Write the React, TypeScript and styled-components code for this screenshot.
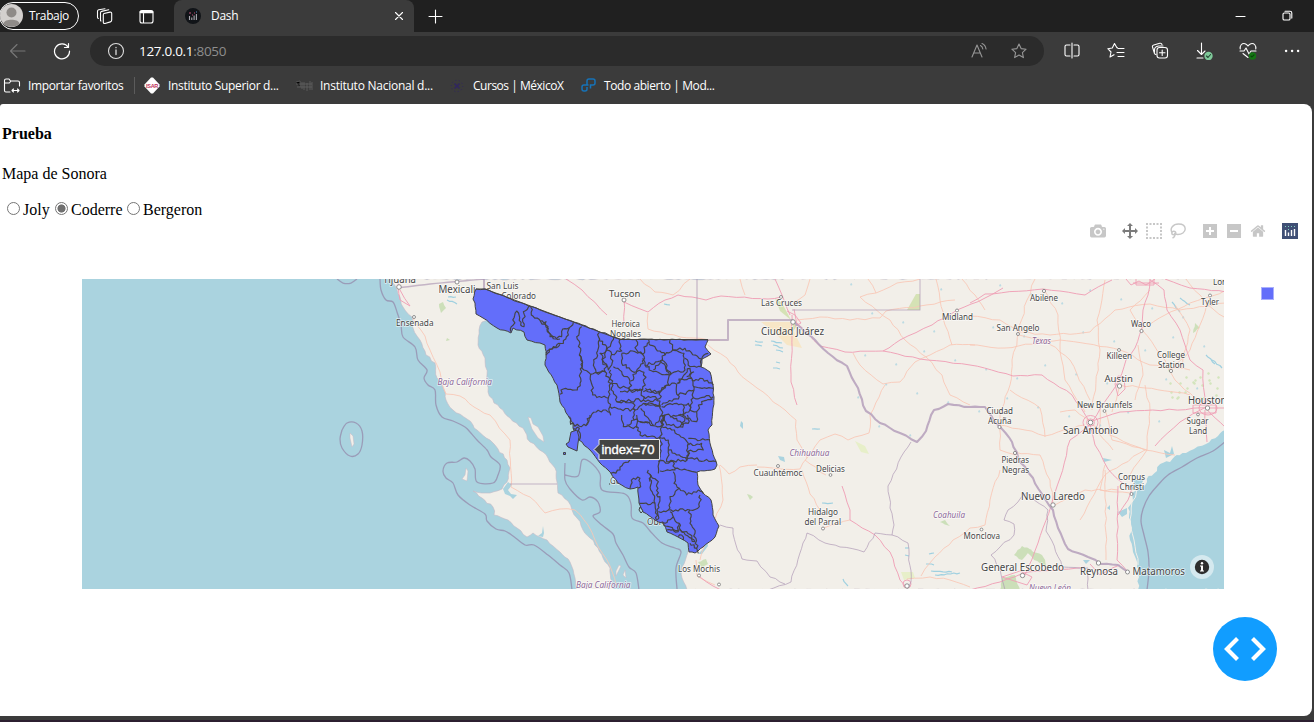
import React, { useState } from 'react';
import styled, { createGlobalStyle } from 'styled-components';

const GlobalStyle = createGlobalStyle`
  * { box-sizing: border-box; }
  html, body { margin: 0; padding: 0; background: #3b3b3b; }
  body { overflow: hidden; }
`;

/* ---------- browser chrome ---------- */

const Window = styled.div`
  width: 1314px;
  height: 722px;
  display: flex;
  flex-direction: column;
  background: #3b3b3b;
  border-bottom: 2px solid #2c1f30;
  color: #fff;
  font-family: 'Open Sans', 'Noto Sans', sans-serif;
  font-size: 12px;
  overflow: hidden;
`;

const TabStrip = styled.div`
  height: 32px;
  flex: none;
  display: flex;
  align-items: stretch;
  background: #202020;
`;

const Profile = styled.div`
  width: 80px;
  height: 28px;
  margin: 2px 0 0 -1px;
  border: 1px solid #fff;
  border-radius: 14px;
  display: flex;
  align-items: center;
  gap: 6px;
  padding: 0 0 1px 0;
  letter-spacing: -0.35px;
`;

const StripIcon = styled.div<{ $gap: number }>`
  display: flex;
  align-items: center;
  margin-left: ${(p) => p.$gap}px;
`;

const Tab = styled.div`
  width: 240px;
  margin-left: 20px;
  border-radius: 8px 8px 0 0;
  background: #3b3b3b;
  display: flex;
  align-items: center;
  padding: 0 10px 1px 11px;
  letter-spacing: -0.3px;
`;

const TabTitle = styled.span`
  flex: 1;
  margin-left: 10px;
`;

const WindowButtons = styled.div`
  margin-left: auto;
  display: flex;
  align-items: center;
  gap: 34px;
  padding-right: 21px;
`;

const Toolbar = styled.div`
  height: 38px;
  flex: none;
  display: flex;
  align-items: center;
  padding: 0 13px 0 9px;
`;

const NavIcons = styled.div`
  width: 81px;
  display: flex;
  align-items: center;
  gap: 26px;
`;

const AddressBar = styled.div`
  width: 954px;
  height: 30px;
  border-radius: 15px;
  background: #2b2b2b;
  display: flex;
  align-items: center;
  padding: 0 16px 0 17px;
`;

const Address = styled.div`
  flex: 1;
  margin-left: 14px;
  font-size: 13.5px;
  letter-spacing: -0.3px;
  span { color: #8e8e8e; }
`;

const AddressIcons = styled.div`
  display: flex;
  gap: 22px;
`;

const ToolIcons = styled.div`
  flex: 1;
  display: flex;
  justify-content: space-between;
  margin-left: 19px;
`;

const Bookmarks = styled.div`
  height: 34px;
  flex: none;
  display: flex;
  align-items: center;
  padding: 0 0 3px 3px;
`;

const Bookmark = styled.div<{ $width: number; $gap: number; $tracking: number }>`
  width: ${(p) => p.$width}px;
  display: flex;
  align-items: center;
  gap: ${(p) => p.$gap}px;
  white-space: nowrap;
  font-size: 12px;
  letter-spacing: ${(p) => p.$tracking}px;
  svg { flex: none; }
`;

const Divider = styled.div`
  width: 1px;
  height: 17px;
  margin-right: 8px;
  background: #5c5c5c;
`;

/* ---------- page ---------- */

const Page = styled.main`
  position: relative;
  width: 1312px;
  height: 612px;
  flex: none;
  padding: 20px 2px 0;
  background: #fff;
  border-radius: 3px 8px 8px 0;
  color: #000;
  font-family: 'Liberation Serif', serif;
  font-size: 16px;
  line-height: 18px;
`;

const Title = styled.h4`
  margin: 1px 0 22px;
  font-size: 16px;
`;

const Subtitle = styled.p`
  margin: 0 0 18px;
`;

const RadioRow = styled.div`
  height: 18px;
  display: flex;
  align-items: flex-start;
`;

const RadioLabel = styled.label<{ $width: number }>`
  width: ${(p) => p.$width}px;
  display: flex;
  white-space: nowrap;
  input {
    width: 13px;
    height: 13px;
    margin: 1px 3px 0 5px;
    flex: none;
    appearance: none;
    border: 1px solid #767676;
    border-radius: 50%;
    background: #fff;
  }
  input:checked {
    background: radial-gradient(circle, #707070 0 3.7px, #fff 4.4px);
  }
`;

const Graph = styled.section`
  display: flex;
  flex-direction: column;
`;

const Modebar = styled.div`
  height: 24px;
  display: flex;
  justify-content: flex-end;
  align-items: center;
  padding-right: 12px;
`;

const ModeGroup = styled.div`
  display: flex;
  gap: 8px;
  margin-left: 16px;
  svg { display: block; }
`;

const Plot = styled.div`
  display: flex;
  margin: 36px 0 0 80px;
`;

const MapFrame = styled.div`
  position: relative;
  width: 1142px;
  height: 310px;
  overflow: hidden;
  svg { display: block; }
`;

const Hover = styled.div`
  position: absolute;
  left: 511px;
  top: 159px;
`;

const Attribution = styled.div`
  position: absolute;
  right: 10px;
  bottom: 10px;
  width: 24px;
  height: 24px;
  border-radius: 50%;
  background: rgba(255, 255, 255, 0.5);
  display: flex;
  align-items: center;
  justify-content: center;
`;

const LegendSwatch = styled.div`
  width: 13px;
  height: 13px;
  margin: 8px 0 0 37px;
  background: #636efa;
  border: 1px solid #aab0fc;
`;

const DevButton = styled.button`
  position: absolute;
  right: 35px;
  bottom: 35px;
  width: 64px;
  height: 64px;
  padding: 0;
  border: 0;
  border-radius: 50%;
  background: #119dff;
`;

/* ---------- map geometry ---------- */

type Point = [number, number];

const parse = (s: string): Point[] =>
  s.trim().split(/\s+/).map((p) => p.split(',').map(Number) as Point);

/* Adds small deterministic irregularities between the vertices of a line. */
const rough = (s: string, amount = 4, step = 12, closed = false): string => {
  const pts = parse(s);
  if (closed) pts.push(pts[0]);
  let d = `M${pts[0][0]} ${pts[0][1]}`;
  for (let i = 1; i < pts.length; i++) {
    const [ax, ay] = pts[i - 1];
    const [bx, by] = pts[i];
    const len = Math.hypot(bx - ax, by - ay) || 1;
    const n = Math.max(1, Math.round(len / step));
    for (let k = 1; k < n; k++) {
      const t = k / n;
      const x = ax + (bx - ax) * t;
      const y = ay + (by - ay) * t;
      const r = Math.sin(x * 12.9898 + y * 78.233) * 43758.5453;
      const off = (r - Math.floor(r) - 0.5) * 2 * amount;
      d += `L${(x - ((by - ay) / len) * off).toFixed(1)} ${(y + ((bx - ax) / len) * off).toFixed(1)}`;
    }
    d += `L${bx} ${by}`;
  }
  return closed ? d + 'Z' : d;
};

/* Smooth curve through the vertices. */
const smooth = (s: string): string => {
  const p = parse(s);
  let d = `M${p[0][0]} ${p[0][1]}`;
  for (let i = 0; i < p.length - 1; i++) {
    const a = p[Math.max(0, i - 1)];
    const b = p[i];
    const c = p[i + 1];
    const e = p[Math.min(p.length - 1, i + 2)];
    d += `C${b[0] + (c[0] - a[0]) / 6} ${b[1] + (c[1] - a[1]) / 6} ${c[0] - (e[0] - b[0]) / 6} ${c[1] - (e[1] - b[1]) / 6} ${c[0]} ${c[1]}`;
  }
  return d;
};

const BAJA =
  '391,279 397,290 400,297 403,307 412,317 413,328 420,340 426,355 435,363 437,378 444,390 446,400 453,410 467,419 473,425 477,430 490,440 498,449 507,460 510,468 507,482 502,489 490,493 473,491 482,498 493,507 494,515 508,520 517,528 527,537 533,533 547,540 560,552 570,562 575,578 577,590 613,590 612,582 610,568 603,558 598,548 590,538 583,530 577,518 572,510 568,501 558,493 557,482 555,468 548,458 543,452 530,442 523,428 510,418 500,408 494,403 488,392 487,375 485,358 478,345 479,330 482,322 488,318 520,325 550,338 565,380 585,425 612,460 632,480 650,505 690,540 688,552 682,567 682,578 687,590 1226,590 1226,278';

const GULF_OF_MEXICO =
  '1226,430 1218,436 1206,444 1194,449 1186,453 1176,455 1170,462 1160,464 1157,471 1148,476 1147,482 1139,488 1132,493 1133,501 1128,508 1129,518 1132,528 1130,540 1133,552 1137,567 1139,577 1138,590 1226,590';

const SONORA =
  '476,289 485,289 540,310 620,339 708,340 705,347 711,354 702,359 701,367 710,372 713,385 714,397 713,408 712,425 708,430 711,447 717,465 715,469 697,472 698,485 703,493 711,500 713,515 719,526 715,537 703,547 695,553 689,552 688,543 678,537 667,532 663,523 655,520 643,512 639,503 638,487 630,489 618,483 608,470 600,463 590,450 579,440 573,428 572,422 560,402 557,385 545,365 546,355 545,345 540,343 527,340 524,332 513,328 511,333 497,328 483,318 476,314 475,303 473,299';

interface Tile { x: number; y: number; lines: string[] }

const MUNICIPALITIES: Tile[] = [
  {
    x: 320, y: 275,
    lines: ['572,170 590,108 602,150 612,155 610,110 628,92', '632,96 634,120 662,140 685,160 690,185 720,192', '678,235 695,222 720,208'],
  },
  {
    x: 540, y: 275,
    lines: [
      '0,138 18,140 22,170 48,192 65,185 68,162 88,158 100,142',
      '18,240 40,215 70,205 85,180 88,158',
      '125,155 110,185 122,220 118,240 128,262 122,310 112,345 70,342 60,358',
      '120,240 132,285 152,298 158,360 205,370 212,325 195,290 152,298',
      '178,172 175,220 162,262 175,298 195,290 200,268 180,235 200,225 215,200 222,185',
      '178,190 215,238 245,228 240,193',
      '200,225 188,260 205,285 215,270 215,238',
      '245,235 285,230 308,238 310,265 282,292 245,265 245,235',
      '288,195 290,225 308,238 322,205 326,195',
      '326,205 360,228 375,240 360,258 315,270 308,250',
      '390,195 398,225 432,235 435,285 390,300 378,265 365,255',
      '375,240 398,225', '398,225 435,220 485,252', '435,250 450,275 483,275',
      '220,275 245,290 270,318 270,345 215,325 212,285',
      '272,318 290,290 312,292 316,330 308,345 270,345',
      '315,270 340,290 388,300 386,330 350,352 316,340',
      '340,285 362,258 388,300',
      '215,325 220,350 230,380 310,375 305,345 240,350',
      '205,370 210,395 235,402 285,405 280,385 230,380',
      '210,395 212,420 190,405 155,418 138,450',
      '285,405 282,435 260,450', '285,405 310,385 360,390 365,420 345,450',
      '310,350 360,352 360,370 310,365', '310,375 360,378 360,395 312,385',
      '360,352 382,330 410,328 415,372 365,390', '365,395 410,385 430,390 428,420 365,422',
      '412,325 425,312 455,310 462,345 415,360', '455,310 450,280 432,300 412,325',
      '455,315 480,310 520,330', '460,335 520,340', '462,345 460,368 520,365',
      '460,368 450,405 470,410 485,380 518,372', '430,390 445,385 450,405 428,420',
      '428,420 440,432 470,440 470,410', '365,422 370,450', '390,425 410,430 428,450', '282,435 330,440',
      '462,290 440,305', '483,275 485,252 505,235',
      '302,400 320,425 340,450',
    ],
  },
  {
    x: 540, y: 415,
    lines: [
      '88,5 92,28 138,32 150,0', '100,40 118,40 118,75',
      '245,0 250,35 295,38 300,60 365,70', '290,0 290,38', '300,20 360,35 375,0',
      '370,0 365,35 362,80 360,135', '365,35 395,45 418,60 445,85 442,135',
      '375,0 380,30 420,35 435,10 415,0', '420,35 445,25 442,0',
      '445,70 510,75', '445,90 485,85 490,105 445,108', '445,108 442,130 528,140',
      '365,70 385,75 385,105 380,140 442,135', '385,105 410,120 440,135',
      '212,175 240,165 250,145 295,120 352,95', '352,95 358,140 355,175',
      '355,140 400,140 405,165 360,168', '405,160 440,165 470,172',
      '270,222 280,190 300,190 302,215 295,220', '330,178 332,210 345,265 350,315', '330,178 355,200 350,240 360,245 352,290 352,315',
      '298,265 345,265', '325,165 330,200', '400,170 402,205 418,220 390,245 385,285 355,290',
      '418,220 440,240 475,225 490,235', '385,285 450,285 478,275 480,240',
      '450,285 450,325 465,355 470,400', '390,290 400,305 375,325 365,320', '400,305 418,325 415,350 370,330',
      '380,345 440,350 465,380', '418,325 425,350 465,380', '450,385 470,400 475,415', '415,365 425,360 430,375',
    ],
  },
];

const MARITIME = [
  '380,279 381,290 386,300 393,302 397,312 401,325 403,337 415,347 418,360 427,370 424,378 428,385 435,390 436,405 442,417 453,421 465,427 470,432 477,440 487,450 491,457 500,465 498,475 493,483 477,482 475,469 470,461 464,458 457,462 447,463 443,471 446,478 453,483 458,495 470,505 485,514 487,521 496,529 505,531 513,536 525,545 534,545 548,555 560,565 569,573 572,590',
  '337,279 343,283 351,283 357,279',
  '342,430 347,423 356,423 362,431 362,445 358,454 350,456 342,448 340,439 342,430',
  '565,463 565,480 570,489 582,500 590,497 598,502 600,512 593,516 602,525 613,534 616,543 623,555 629,567 636,573 639,590',
  '565,475 578,476 582,460 590,462 600,474 602,490 625,494 631,504 632,518 643,523 650,531 662,543 675,548 681,552 676,568 677,589',
  '1226,441 1213,451 1197,458 1182,467 1168,475 1158,485 1149,496 1143,509 1141,521 1144,535 1148,552 1149,570 1147,590',
];

const STATE_BORDERS: { s: string; w: number }[] = [
  { s: '397,288 430,284 484,279', w: 1.4 }, { s: '484,279 484,290 620,340 728,340 728,320 792,320', w: 2 },
  { s: '697,279 697,340', w: 1.2 }, { s: '792,310 920,310 920,279', w: 1.01 }, { s: '510,484 557,484', w: 1.01 },
  { s: '911,442 901,457 888,486 890,508 894,525 892,535 875,533 864,552 840,547 825,543 807,533 803,543 791,582 768,590', w: 1 },
  { s: '892,535 908,543 911,582 907,590', w: 1 },
  { s: '720,525 733,528 736,545 742,559 757,561 770,577 785,584', w: 1 },
  { s: '1027,493 1008,510 1004,520 1014,524 1014,535 991,555 1000,569 1005,590', w: 1 },
  { s: '1027,493 1048,510 1046,531 1052,541 1062,567 1088,568 1088,590', w: 1 },
];

const RIO_GRANDE =
  '792,320 806,333 815,340 828,353 847,366 858,388 866,411 880,423 900,433 917,442 926,431 934,410 948,404 970,407 985,407 998,425 1012,442 1020,462 1033,478 1042,494 1053,510 1058,528 1068,549 1088,557 1101,564 1118,565 1128,572';

const MOTORWAYS = [
  '566,279 582,290 607,315', '624,299 624,325', '624,302 648,312 665,300 678,295 706,300 721,296 768,299 781,297', '775,279 782,295 790,315',
  '792,315 792,335 791,382 797,405', '797,323 820,346 845,352 883,351 900,340 932,325 957,310 985,298 1003,288',
  '883,351 920,359 970,365 1013,376 1042,375 1072,395 1090,422', '970,303 985,294 1043,289 1085,295 1112,280',
  '1092,422 1106,400 1119,380 1126,360 1135,348 1142,328 1143,310 1148,295 1150,279', '1090,422 1120,412 1210,408 1226,408',
  '1090,425 1070,440 1060,478 1051,506 1038,543 1025,575', '1090,425 1095,445 1108,469 1130,490',
  '842,486 850,510 850,520 875,535 890,552 900,580 907,588', '1118,486 1117,560 1128,572', '1150,280 1164,290 1167,310 1180,330 1190,360 1203,370 1205,405',
  '400,290 410,306 400,300 398,280', '700,577 713,586 721,590', '1120,565 1100,575 1090,564', '970,590 1000,582 1028,572 1085,567',
  '1132,487 1128,500 1118,515', '1155,446 1180,422 1206,407', '1205,410 1207,442', '1205,407 1226,428', '1165,279 1190,288 1226,292',
];

const ROADS = [
  '413,318 425,336 430,350 440,372 446,394 460,396 474,407 490,415 505,434 510,440 511,487 530,497 545,513 560,509 575,510 588,525 595,540 607,560 616,585',
  '640,279 655,292 673,295 690,279', '648,313 648,329 680,337 720,340', '708,345 727,358 738,372 757,388 785,410 796,420 797,440 807,458 820,440 835,434 848,440 869,433 870,415 885,385',
  '797,320 820,317 850,320 880,318 886,311 920,306 955,300', '868,279 876,293 860,297 890,320 905,340 926,357 942,375 950,395 970,405', '876,293 897,283 920,279',
  '807,458 800,469 780,469 757,467', '720,465 729,474 740,467 757,465', '805,460 826,475', '802,470 810,494 820,510', '824,528 850,520',
  '853,353 860,365 883,384 900,382 915,362 930,355 950,345 975,345', '936,279 940,300 945,325 952,345', '962,279 975,295 985,310',
  '921,576 935,557 953,540 970,528 985,525 990,500 1000,470', '907,579 930,577 950,580 970,587', '970,316 1000,320 1020,332 1050,335 1090,332 1115,310 1150,304 1180,310 1226,303',
  '970,345 1005,348 1060,340 1120,350 1150,365 1190,370', '1020,330 1012,360 1010,385 1000,415', '1044,290 1058,315 1060,345 1065,380 1085,412',
  '1035,279 1027,300 1018,333', '1105,280 1097,320 1100,350 1092,410', '1019,335 1045,340 1070,360 1090,400', '1000,425 1025,430 1045,436 1085,425',
  '1015,452 1040,455 1050,480 1053,505', '1092,425 1110,435 1145,450 1175,455', '1105,410 1112,440 1147,450', '1105,465 1100,490 1130,493', '1105,470 1106,560',
  '1120,385 1145,388 1190,395', '1145,385 1150,410 1147,450 1125,480', '1142,330 1165,360 1175,380 1200,402', '1142,328 1165,315 1190,303 1212,296 1226,290',
  '1090,422 1075,410 1060,412', '1170,372 1190,350 1200,325 1210,298', '1150,290 1130,310 1142,328', '1080,520 1105,475 1145,450', '1055,505 1085,490 1118,490',
  '1000,415 1000,450 1016,455', '1010,390 1040,408 1045,437', '1181,368 1190,330 1175,305', '1186,279 1200,295 1213,309 1226,318', '1100,400 1100,435 1113,450',
  '740,279 745,295', '810,279 805,295 793,303', '719,465 723,500 705,540 700,560', '696,560 697,576 715,585', '1138,345 1143,375 1135,400', '1119,388 1112,412',
];

const LAKES = [
  '755,341 763,342', '755,345 762,346', '771,341 782,343', '773,345 783,348', '776,350 783,352', '776,362 780,363', '773,368 780,369', '812,429 820,429', '822,503 833,503',
  '905,548 909,548', '905,555 909,556', '926,564 934,565', '931,571 952,572', '935,575 960,573', '448,297 456,297', '447,300 457,304', '664,304 670,305',
  '929,554 934,553', '843,579 848,586', '1190,305 1180,298', '1172,302 1180,312', '1212,360 1222,368', '1206,355 1215,364',
];

const PARKS = [
  '439,304 443,302 446,308 441,313', '1032,550 1022,546 1014,555 1022,560', '1025,548 1034,560 1048,568 1042,555', '1002,578 1015,575 1020,590 1000,590',
  '940,522 950,526 945,520', '747,494 753,497 750,500', '698,562 706,559 708,564 702,568', '1195,323 1200,328 1193,333', '447,338 450,340 446,341',
];

interface Label { t: string; x: number; w: number; y: number; size?: number; region?: boolean }

const LABELS: Label[] = [
  { t: 'Tijuana', x: 383, w: 33, y: 283, size: 10 }, { t: 'Mexicali', x: 438.5, w: 37, y: 293, size: 10 },
  { t: 'San Luis', x: 486.5, w: 32, y: 289 }, { t: 'Colorado', x: 501.5, w: 34.5, y: 299 },
  { t: 'Ensenada', x: 396, w: 37.5, y: 326 }, { t: 'Baja California', x: 437.5, w: 54.5, y: 385, region: true },
  { t: 'Tucson', x: 609, w: 31.5, y: 296.5, size: 9.5 }, { t: 'Heroica', x: 611.5, w: 28.5, y: 327 }, { t: 'Nogales', x: 610, w: 31, y: 337 },
  { t: 'Los Mochis', x: 678, w: 42, y: 572 }, { t: 'Baja California', x: 576, w: 54.5, y: 588, region: true },
  { t: 'Las Cruces', x: 761, w: 41, y: 306 }, { t: 'Ciudad Juárez', x: 761, w: 63, y: 335, size: 10 },
  { t: 'Midland', x: 942, w: 31, y: 320 }, { t: 'Chihuahua', x: 789.5, w: 40, y: 455.5, region: true },
  { t: 'Cuauhtémoc', x: 753.5, w: 49, y: 475.5 }, { t: 'Delicias', x: 816, w: 29, y: 471.5 },
  { t: 'Hidalgo', x: 808, w: 30, y: 515 }, { t: 'del Parral', x: 804.5, w: 36.5, y: 524.5 },
  { t: 'Coahuila', x: 933, w: 32, y: 518, region: true }, { t: 'Abilene', x: 1030, w: 28, y: 300.5 },
  { t: 'San Angelo', x: 996.5, w: 43, y: 331 }, { t: 'Texas', x: 1032, w: 19, y: 343.5, region: true },
  { t: 'Waco', x: 1131, w: 20, y: 327 }, { t: 'Killeen', x: 1106.5, w: 25.5, y: 358.5 },
  { t: 'College', x: 1157, w: 28, y: 358 }, { t: 'Station', x: 1158, w: 26.5, y: 367.5 },
  { t: 'Tyler', x: 1201, w: 18, y: 305 }, { t: 'Longview', x: 1213, w: 36, y: 285 },
  { t: 'Austin', x: 1104.5, w: 28.5, y: 382, size: 9.8 }, { t: 'New Braunfels', x: 1077, w: 55.5, y: 407.5 },
  { t: 'Houston', x: 1188, w: 38.5, y: 404, size: 10 }, { t: 'Sugar', x: 1186.5, w: 22, y: 424 }, { t: 'Land', x: 1189, w: 18, y: 433.5 },
  { t: 'San Antonio', x: 1063, w: 55.5, y: 434, size: 10 }, { t: 'Ciudad', x: 986.5, w: 26.5, y: 414 }, { t: 'Acuña', x: 988, w: 23.5, y: 423.5 },
  { t: 'Piedras', x: 1001.5, w: 27.5, y: 463 }, { t: 'Negras', x: 1002, w: 27, y: 472.5 }, { t: 'Corpus', x: 1118, w: 27, y: 480 },
  { t: 'Christi', x: 1119.5, w: 24.5, y: 489.5 }, { t: 'Nuevo Laredo', x: 1021, w: 64, y: 500, size: 10 },
  { t: 'Monclova', x: 963.5, w: 36.5, y: 538.5 }, { t: 'General Escobedo', x: 981, w: 83, y: 570.5, size: 10 },
  { t: 'Reynosa', x: 1080, w: 38, y: 575, size: 10 }, { t: 'Matamoros', x: 1132.5, w: 52.5, y: 575, size: 10 },
  { t: 'Nuevo León', x: 1029, w: 42, y: 590.5, region: true },
];

const TOWNS: [number, number, number][] = [
  [399, 287, 2.3], [457, 282, 2], [414, 317, 1.5], [624, 300, 2], [781, 297, 1.5], [793, 322, 2.3], [957, 310.5, 1.5], [778, 466, 1.5], [830.5, 475, 1.4],
  [823, 528.5, 1.5], [907, 586, 2.2], [1044, 291, 1.6], [1018, 334, 1.5], [1141.5, 331, 1.6], [1119, 350, 1.5], [1171, 371, 1.6], [1119.5, 386, 2.2], [1104.5, 411, 1.4],
  [1090.5, 422.5, 2.3], [1207.5, 408, 2.2], [1198, 414.5, 1.4], [999.5, 427, 1.6], [1015, 453, 1.6], [1131.5, 494, 1.5], [1053, 505, 2.2], [981.5, 529.5, 1.4],
  [1022.5, 575.5, 2.2], [1098.5, 563, 2.2], [1127.5, 572, 2], [1210, 295.5, 1.5], [699, 575.5, 1.5], [719, 584.5, 1.5],
];

const MapLabel = ({ l }: { l: Label }) => (
  <text
    x={l.x}
    y={l.y}
    textLength={l.w}
    lengthAdjust="spacingAndGlyphs"
    fontFamily="'Noto Sans', sans-serif"
    fontSize={l.size ?? 8.4}
    fontStyle={l.region ? 'italic' : 'normal'}
    fill={l.region ? '#8d699a' : '#464646'}
    stroke="#fff"
    strokeOpacity={0.65}
    strokeWidth={1.6}
    paintOrder="stroke"
  >
    {l.t}
  </text>
);

const SonoraMap = () => (
  <svg width="1142" height="310" viewBox="82 279 1142 310" fill="none" strokeLinejoin="round">
    <rect x="82" y="279" width="1142" height="310" fill="#aad3df" />
    <path d={rough(BAJA, 1.1, 4, true)} fill="#f2efe9" stroke="#c5b8c6" strokeWidth="0.6" />
    <path d={rough(GULF_OF_MEXICO, 1.6, 4, true)} fill="#aad3df" />
    <path d={rough('1205,440 1185,451 1165,459 1152,472 1140,486 1132,502 1130,520 1134,540 1138,565', 1, 6)} stroke="#f2efe9" strokeWidth="1" />
    <g fill="#f2efe9" stroke="#c5b8c6" strokeWidth="0.5">
      <path d="M528 417l3 1 2 6 5 3 5 9 1 6-6-4-6-9z" /><path d="M350 433l3 3 1 8-2 3-2-9z" />
      <path d="M466 468l2 3-1 10-5-2 3-4z" /><path d="M616 571l3-6 2 1-5 10zM623 575l2-5 1 8z" />
    </g>
    <g fill="#aad3df">
      <path d="M508 482l-5 7 2 5 5 2 3 3 4-4-6-1-3-4 4-5z" /><path d="M543 526l-1 7-4 3 5 1 1-4z" />
      <path d="M707 541l-4 8-5 5 4 0 6-8z" /><path d="M741 421l2 2v6l-3-3zM778 456l6 1 1 5-5-2zM1112 460l-8 2-1-4zM1127 508l-9 4 4 5 5-3z" />
      <path d="M1145 477l-8 3-5-1 3 5-8 2 5 4 8-3zM1174 454l-2-8-2 7-6-3 2 8zM1110 505l-3 3 3 2zM1090 560l-4 4-3-4z" />
    </g>
    <g fill="#cfdfa9" opacity="0.8">
      <path d="M775 298l7 5 9 17-11-9z" /><path d="M907 310l9-16h4v16z" /><path d="M792 320l5 6-4 5z" />
      {PARKS.map((p) => <path key={p} d={rough(p, 0.8, 3, true)} fill="#c3dcae" />)}
    </g>
    <path d="M761 322h29l4 10 8 16-15-3-12-12z" fill="#f7e3bd" opacity="0.8" />
    <path d="M855 441l10 5 4 8-8-2zM901 572h12l2 6-11 2z" fill="#e7efc9" />
    <g stroke="#9fd0e0" strokeWidth="1.2">{LAKES.map((l) => <path key={l} d={rough(l, 0.7, 3)} />)}</g>
    <g fill="#bcdbe3">
      {Array.from({ length: 46 }, (_, i) => {
        const x = 850 + ((i * 83) % 370);
        const y = 284 + ((i * 47) % 155);
        return <path key={i} d={`M${x} ${y}l1.6-1 .8 2-1.6.8z`} />;
      })}
    </g>
    <g fill="#d3e5bd">
      {Array.from({ length: 24 }, (_, i) => {
        const x = 1168 + ((i * 31) % 54);
        const y = 370 + ((i * i * 7) % 30);
        return <path key={i} d={`M${x} ${y}l2-1 1 2-2 1z`} />;
      })}
    </g>
    <g stroke="#f9c6b5" strokeWidth="0.85">{ROADS.map((r) => <path key={r} d={rough(r, 1, 7)} />)}</g>
    <g stroke="#efa0b6" strokeWidth="0.95">{MOTORWAYS.map((r) => <path key={r} d={rough(r, 0.7, 8)} />)}</g>
    <g stroke="#ef9eb4" strokeWidth="0.9">
      <ellipse cx="1090.5" cy="422.5" rx="7.5" ry="7" /><ellipse cx="1090.5" cy="422.5" rx="4" ry="3.6" />
      <rect x="1193" y="405" width="23" height="8" /><ellipse cx="1208" cy="408" rx="9" ry="7" />
      <path d="M1126 279l5 6 8-4 7 4 9-6M1136 279v6h18v-6M1133 283h26M1115 384l3-8 6 1 1 12-7 7z" />
      <path d="M787 311l8 4 6 8-6 3M794 309l3 16M1002 577l18-6 12 6-5 8z" /><circle cx="907" cy="584" r="4" />
    </g>
    <g stroke="#aa93b2" strokeOpacity="0.65">{STATE_BORDERS.map((b) => <path key={b.s} d={rough(b.s, b.w > 1 ? 0 : 1, 6)} strokeWidth={b.w} />)}</g>
    <path d={rough(RIO_GRANDE, 1, 6)} stroke="#b8a3be" strokeWidth="2.1" strokeOpacity="0.9" />
    <g stroke="#948aab" strokeOpacity="0.75" strokeWidth="1.3">{MARITIME.map((m) => <path key={m} d={smooth(m)} />)}</g>
    <g fill="#fff" stroke="#777" strokeWidth="0.8">{TOWNS.map(([x, y, r]) => <circle key={`${x}-${y}`} cx={x} cy={y} r={r} />)}</g>
    {LABELS.map((l) => <MapLabel key={l.t + l.y} l={l} />)}
    <MapLabel l={{ t: 'Guaymas', x: 610, w: 34, y: 484 }} />
    <MapLabel l={{ t: 'Obregón', x: 647, w: 35, y: 525, size: 9.5 }} />
    <path d={rough(SONORA, 0.7, 4, true)} fill="#636efa" stroke="#444" strokeWidth="1" />
    <path d="M476 289H485L620 339.500H708" stroke="#444" strokeWidth="1" />
    {MUNICIPALITIES.map((tile) => (
      <g key={`${tile.x}-${tile.y}`} transform={`translate(${tile.x} ${tile.y}) scale(0.33333)`} stroke="#444" strokeWidth="3.5">
        {tile.lines.map((l) => <path key={l} d={rough(l, 5, 7)} />)}
      </g>
    ))}
    <path d="M571 432l6-2 2 7-1 6-1 8-9-4-2-3 3-2z" fill="#636efa" stroke="#444" />
    <rect x="563.500" y="452.500" width="2" height="2" fill="#636efa" stroke="#444" />
    <path d="M609 484h1M640 507l3 4-2 2-2-3z" stroke="#444" fill="#aad3df" />
  </svg>
);

/* ---------- icons ---------- */

const PLOT_ICONS = {
  camera: 'm500 450c-83 0-150-67-150-150 0-83 67-150 150-150 83 0 150 67 150 150 0 83-67 150-150 150z m400 150h-120c-16 0-34 13-39 29l-31 93c-6 15-23 28-40 28h-340c-16 0-34-13-39-28l-31-94c-6-15-23-28-40-28h-120c-55 0-100-45-100-100v-450c0-55 45-100 100-100h800c55 0 100 45 100 100v450c0 55-45 100-100 100z m-400-550c-138 0-250 112-250 250 0 138 112 250 250 250 138 0 250-112 250-250 0-138-112-250-250-250z m365 380c-19 0-35 16-35 35 0 19 16 35 35 35 19 0 35-16 35-35 0-19-16-35-35-35z',
  pan: 'm1000 350l-187 188 0-125-250 0 0 250 125 0-188 187-187-187 125 0 0-250-250 0 0 125-188-188 186-187 0 125 252 0 0-250-125 0 187-188 188 188-125 0 0 250 250 0 0-126 187 188z',
  plus: 'm1 787l0-875 875 0 0 875-875 0z m687-500l-187 0 0-187-125 0 0 187-188 0 0 125 188 0 0 187 125 0 0-187 187 0 0-125z',
  minus: 'm0 788l0-876 876 0 0 876-876 0z m688-500l-500 0 0 125 500 0 0-125z',
  home: 'm786 296v-267q0-15-11-26t-25-10h-214v214h-143v-214h-214q-15 0-25 10t-11 26v267q0 1 0 2t0 2l321 264 321-264q1-1 1-4z m124 39l-34-41q-5-5-12-6h-2q-7 0-12 3l-386 322-386-322q-7-4-13-4-7 2-12 7l-35 41q-4 5-3 13t6 12l401 334q18 15 42 15t43-15l136-114v109q0 8 5 13t13 5h107q8 0 13-5t5-13v-227l122-102q5-5 6-12t-4-13z',
};

const ModeIcon = ({ d, width = 1000, active = false }: { d: string; width?: number; active?: boolean }) => (
  <svg width="16" height="16" viewBox={`0 0 ${width} 1000`}>
    <path d={d} transform="matrix(1 0 0 -1 0 850)" fill={active ? '#7b7b7b' : '#c7c7c7'} />
  </svg>
);

const Icon = ({ size = 16, color = '#fff', children }: { size?: number; color?: string; children: React.ReactNode }) => (
  <svg width={size} height={size} viewBox={`0 0 ${size} ${size}`} fill="none" stroke={color} strokeWidth="1.1" strokeLinecap="round" strokeLinejoin="round">
    {children}
  </svg>
);

const STAR = 'M8 1l2.100 4.600 5 .6-3.700 3.400 1 5L8 12.100l-4.400 2.500 1-5L.9 6.200l5-.6z';

const Chrome = () => (
  <>
    <TabStrip>
      <Profile>
        <svg width="23" height="23" viewBox="0 0 23 23">
          <circle cx="11.500" cy="11.500" r="11.500" fill="#d3d0ce" />
          <circle cx="11.500" cy="8.500" r="5" fill="#8f8b88" />
          <path d="M3.500 19.500c1-3 4-3.800 8-3.800s7 .8 8 3.800c-4 4.300-12 4.300-16 0z" fill="#8f8b88" />
        </svg>
        Trabajo
      </Profile>
      <StripIcon $gap={17}>
        <Icon size={17}><path d="M8 5.500l6-1.400q1.700-.2 1.700 1.500v6.500q0 1.500-1.300 1.800L9 15.500q-1.700.2-1.700-1.500V7q0-1.200.7-1.500zM5 13l-.5-.3V5q0-1.300 1.200-1.600l7-1.700M2.300 10.500q-.8-.4-.8-1.300V3.300Q1.500 2 2.700 1.700L9 .8" /></Icon>
      </StripIcon>
      <StripIcon $gap={26}>
        <Icon size={15}><rect x="1" y="1.500" width="13" height="12.500" rx="2" /><path d="M1.800 3h11.400" strokeWidth="2.400" /><path d="M4.500 4.500v9" /></Icon>
      </StripIcon>
      <Tab>
        <svg width="16" height="16" viewBox="0 0 16 16">
          <circle cx="8" cy="8" r="8" fill="#111418" />
          <path d="M4.500 8v4M6.800 9.500V12M9.100 7.500V12M11.400 6V12" stroke="#a8a8b0" strokeWidth="1.100" />
          <path d="M4 5h2M7 7h1M9 5h1" stroke="#c5517c" /><path d="M11 4h1" stroke="#4f8ac0" />
        </svg>
        <TabTitle>Dash</TabTitle>
        <Icon size={10}><path d="M1.500 1.500l7 7M8.500 1.500l-7 7" /></Icon>
      </Tab>
      <StripIcon $gap={14}><Icon size={15}><path d="M7.500 1v13M1 7.500h13" /></Icon></StripIcon>
      <WindowButtons>
        <Icon size={12}><path d="M1 6.500h9" /></Icon>
        <Icon size={12}><rect x="2" y="3" width="7" height="7" rx="1.300" /><path d="M4 1.300h5q1.800 0 1.800 1.800v5" /></Icon>
      </WindowButtons>
    </TabStrip>
    <Toolbar>
      <NavIcons>
        <Icon size={18} color="#777"><path d="M16 9H1.500M8 2.500L1.500 9 8 15.500" /></Icon>
        <Icon size={18}><path d="M15.300 5.300A7.500 7.500 0 1 0 16.500 9M15.500 1.500v4h-4" strokeWidth="1.200" /></Icon>
      </NavIcons>
      <AddressBar>
        <Icon size={18} color="#ddd"><circle cx="9" cy="9" r="7.500" /><path d="M9 8v4.500M9 5.500v.2" strokeWidth="1.300" /></Icon>
        <Address>127.0.0.1<span>:8050</span></Address>
        <AddressIcons>
          <Icon size={18} color="#969696"><path d="M2 15L7 3l5 12M3.800 11h6.400M10.500 3.500q2 1 2.300 3.500M12 1.500q3.500 1.500 4 5.500" /></Icon>
          <Icon size={18} color="#969696"><path d={STAR} transform="translate(1 1)" /></Icon>
        </AddressIcons>
      </AddressBar>
      <ToolIcons>
        <Icon size={18}><path d="M7 3H3.500Q2 3 2 4.500v8Q2 14 3.500 14H7M11 3h3.500Q16 3 16 4.500v8q0 1.500-1.500 1.500H11M9 1v15" /></Icon>
        <Icon size={18}><path d="M10.500 5.800L9.800 5.600 7.500 1.500 5.300 6l-4.500.7L4 10l-1 5 4-2.300M11 6.500h6M10 10.500h7M11 14.500h6" /></Icon>
        <Icon size={18}><rect x="6" y="5.500" width="10.500" height="10.500" rx="2.500" /><path d="M11.200 8v5.500M8.500 10.700H14M5 12.500q-1 0-1.500-1L1.500 5Q1 3.500 2.800 3l6-1.700q1.700-.4 2.200 1.200M3.500 10V8q0-3.500 4-4H12" /></Icon>
        <Icon size={18}><path d="M6.500 1v11M2.500 8.500l4 4 3.500-3.500M2 16h6" /><circle cx="13.500" cy="14" r="4.200" fill="#7fc99a" stroke="none" /><path d="M11.500 14l1.500 1.500 2.500-3" stroke="#264735" /></Icon>
        <Icon size={18}><path d="M1.200 7C.8 3 3 1.500 5 1.500 7 1.500 8 3 9 4c1-1 2-2.500 4-2.500S17.200 3 16.800 7M1 9h4l2-3 3 6 2-3h5M4 11.500l5 4" /><circle cx="13.500" cy="14" r="3.700" fill="#147514" stroke="none" /><path d="M11.900 14l1.100 1 2-2.200" stroke="#0b430b" /></Icon>
        <Icon size={18}><path d="M3 9h.2M9 9h.2M15 9h.2" strokeWidth="2.300" /></Icon>
      </ToolIcons>
    </Toolbar>
    <Bookmarks>
      <Bookmark $width={131} $gap={7} $tracking={-0.36}>
        <Icon size={18}><path d="M7 15H3q-1.500 0-1.500-1.500V3.500Q1.500 2 3 2h3l1.500 2H15q1.500 0 1.500 1.500V9M1.500 6h4.800L8 4M9 13.500h7M10.500 12L9 13.500l1.500 1.500M14.500 12l1.500 1.500-1.500 1.500" /></Icon>
        Importar favoritos
      </Bookmark>
      <Divider />
      <Bookmark $width={153} $gap={7} $tracking={-0.32}>
        <svg width="18" height="17" viewBox="0 0 18 17">
          <path d="M8 .5h2l6.500 7v2l-6.500 7H8l-6.500-7v-2z" fill="#fff" />
          <text x="3" y="10.500" fontSize="5.500" fontWeight="700" fontFamily="Liberation Sans, sans-serif" fill="#bd315b" textLength="12">ISAR</text>
        </svg>
        Instituto Superior d...
      </Bookmark>
      <Bookmark $width={154} $gap={7} $tracking={-0.25}>
        <svg width="17" height="12" viewBox="0 0 17 12" stroke="#626262" strokeWidth="0.8"><path d="M0 2l4-1v6M6 2v7M8 2v8M11 3v8M14 1v9M0 4h16M1 7h15M16 2v8" /></svg>
        Instituto Nacional d...
      </Bookmark>
      <Bookmark $width={131} $gap={9} $tracking={-0.48}>
        <svg width="14" height="14" viewBox="0 0 14 14" stroke="#30265f" fill="none"><path d="M4.500 4.500l5 5M9.500 4.500l-5 5" strokeWidth="1.700" /><circle cx="7" cy="7" r="5.700" strokeDasharray="1 2.500" /></svg>
        Cursos | MéxicoX
      </Bookmark>
      <Bookmark $width={150} $gap={8} $tracking={-0.42}>
        <svg width="15" height="15" viewBox="0 0 15 15" fill="none" stroke="#1673b8" strokeWidth="1.500"><path d="M7.500 7H3Q1 7 1 9v2q0 2 2 2h1q2 0 2-2V9M6 7V3q0-2 2-2h4q2 0 2 2v2q0 2-2 2H9.500v3.500" /></svg>
        Todo abierto | Mod...
      </Bookmark>
    </Bookmarks>
  </>
);

const OPTIONS = [
  { name: 'Joly', width: 48 },
  { name: 'Coderre', width: 72 },
  { name: 'Bergeron', width: 90 },
];

export default function App() {
  const [choice, setChoice] = useState('Coderre');
  return (
    <Window>
      <GlobalStyle />
      <Chrome />
      <Page>
        <Title>Prueba</Title>
        <Subtitle>Mapa de Sonora</Subtitle>
        <RadioRow>
          {OPTIONS.map((o) => (
            <RadioLabel key={o.name} $width={o.width}>
              <input type="radio" name="candidate" checked={choice === o.name} onChange={() => setChoice(o.name)} />
              {o.name}
            </RadioLabel>
          ))}
        </RadioRow>
        <Graph>
          <Modebar>
            <ModeGroup><ModeIcon d={PLOT_ICONS.camera} /></ModeGroup>
            <ModeGroup>
              <ModeIcon d={PLOT_ICONS.pan} active />
              <svg width="16" height="16" viewBox="0 0 16 16" fill="#c7c7c7">
                {[0, 3.5, 7, 10.5, 14].map((p) => (
                  <React.Fragment key={p}>
                    <rect x={p} y="0" width="2" height="2" /><rect x={p} y="14" width="2" height="2" />
                    <rect x="0" y={p} width="2" height="2" /><rect x="14" y={p} width="2" height="2" />
                  </React.Fragment>
                ))}
              </svg>
              <svg width="16" height="16" viewBox="0 0 16 16" fill="none" stroke="#c7c7c7" strokeWidth="1.400">
                <path d="M2 9.500C-.5 5.500 3 1 8.500 1c4 0 6.700 2 6.700 5 0 3.200-3.500 5.500-7.500 5.500-1.500 0-2.500-.4-3.500-1.500" />
                <ellipse cx="3.800" cy="10" rx="2" ry="1.800" /><path d="M5 11.500Q5 14 2.500 15" />
              </svg>
            </ModeGroup>
            <ModeGroup>
              <ModeIcon d={PLOT_ICONS.plus} width={875} />
              <ModeIcon d={PLOT_ICONS.minus} width={875} />
              <ModeIcon d={PLOT_ICONS.home} width={928.6} />
            </ModeGroup>
            <ModeGroup>
              <svg width="16" height="16" viewBox="0 0 16 16">
                <rect width="16" height="16" fill="#3f4f75" />
                <path d="M3.500 7v6M6.500 9.500V13M9.500 7v6M12.500 6v7" stroke="#fff" strokeWidth="1.400" />
                <path d="M3 3.500h1M6 3.500h1M9 3.500h1M12 3.500h1M6 6.500h1" stroke="#80cfbe" strokeWidth="1.200" />
              </svg>
            </ModeGroup>
          </Modebar>
          <Plot>
            <MapFrame>
              <SonoraMap />
              <Hover>
                <svg width="68" height="23" viewBox="0 0 68 23">
                  <path d="M1 11.500L6 6.500V1.500H66.500V21.500H6V16.500Z" fill="#444" stroke="#e5e5e5" />
                  <text x="8.500" y="16" fill="#fff" stroke="#fff" strokeWidth="0.35" fontFamily="Liberation Sans, Arial, sans-serif" fontSize="13" textLength="53">index=70</text>
                </svg>
              </Hover>
              <Attribution>
                <svg width="16" height="16" viewBox="0 0 16 16">
                  <circle cx="8" cy="8" r="7.200" fill="#2e2e2e" />
                  <circle cx="8" cy="4.200" r="1.200" fill="#fff" /><path d="M6 6.500h3v5h1v1H6v-1h1v-4H6z" fill="#fff" />
                </svg>
              </Attribution>
            </MapFrame>
            <LegendSwatch />
          </Plot>
        </Graph>
        <DevButton aria-label="Dev tools">
          <svg width="64" height="64" viewBox="0 0 64 64" fill="none" stroke="#fff" strokeWidth="4.200"><path d="M24.500 21.500L14 32l10.500 10.500M39.500 21.500L50 32 39.500 42.500" /></svg>
        </DevButton>
      </Page>
    </Window>
  );
}
